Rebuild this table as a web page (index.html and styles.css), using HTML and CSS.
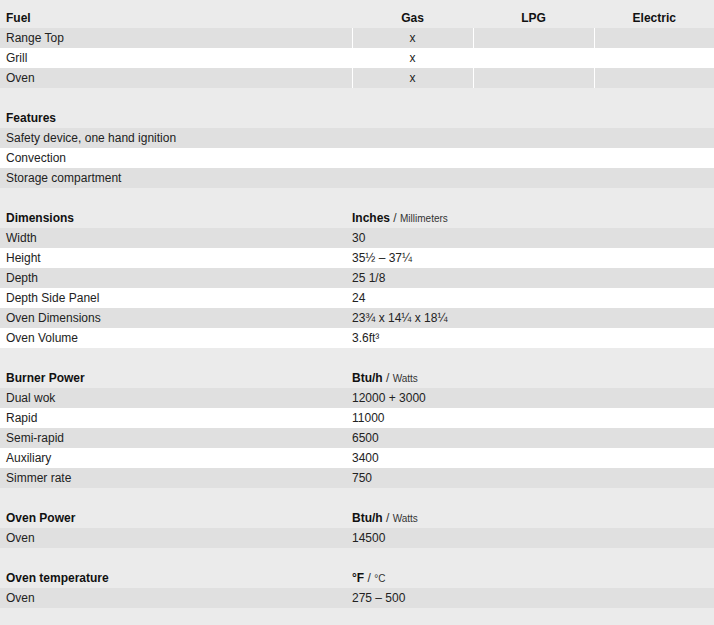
FILE: index.html
```html
<!DOCTYPE html>
<html>
<head>
<meta charset="utf-8">
<link rel="stylesheet" href="styles.css">
</head>
<body>
<div class="specs">
  <table class="spec fuel">
    <colgroup><col class="c-label"><col class="c-opt"><col class="c-opt"><col></colgroup>
    <tr class="head"><th>Fuel</th><th class="ctr">Gas</th><th class="ctr">LPG</th><th class="ctr">Electric</th></tr>
    <tr><td>Range Top</td><td class="opt">x</td><td class="opt"></td><td class="opt"></td></tr>
    <tr><td>Grill</td><td class="opt">x</td><td class="opt"></td><td class="opt"></td></tr>
    <tr><td>Oven</td><td class="opt">x</td><td class="opt"></td><td class="opt"></td></tr>
  </table>

  <table class="spec">
    <tr class="head"><th>Features</th></tr>
    <tr><td>Safety device, one hand ignition</td></tr>
    <tr><td>Convection</td></tr>
    <tr><td>Storage compartment</td></tr>
  </table>

  <table class="spec two">
    <colgroup><col class="c-name"><col></colgroup>
    <tr class="head"><th>Dimensions</th><th>Inches <span class="unit">/ <small>Millimeters</small></span></th></tr>
    <tr><td>Width</td><td>30</td></tr>
    <tr><td>Height</td><td>35½ – 37¼</td></tr>
    <tr><td>Depth</td><td>25 1/8</td></tr>
    <tr><td>Depth Side Panel</td><td>24</td></tr>
    <tr><td>Oven Dimensions</td><td>23¾ x 14¼ x 18¼</td></tr>
    <tr><td>Oven Volume</td><td>3.6ft³</td></tr>
  </table>

  <table class="spec two">
    <colgroup><col class="c-name"><col></colgroup>
    <tr class="head"><th>Burner Power</th><th>Btu/h <span class="unit">/ <small>Watts</small></span></th></tr>
    <tr><td>Dual wok</td><td>12000 + 3000</td></tr>
    <tr><td>Rapid</td><td>11000</td></tr>
    <tr><td>Semi-rapid</td><td>6500</td></tr>
    <tr><td>Auxiliary</td><td>3400</td></tr>
    <tr><td>Simmer rate</td><td>750</td></tr>
  </table>

  <table class="spec two">
    <colgroup><col class="c-name"><col></colgroup>
    <tr class="head"><th>Oven Power</th><th>Btu/h <span class="unit">/ <small>Watts</small></span></th></tr>
    <tr><td>Oven</td><td>14500</td></tr>
  </table>

  <table class="spec two">
    <colgroup><col class="c-name"><col></colgroup>
    <tr class="head"><th>Oven temperature</th><th>°F <span class="unit">/ <small>°C</small></span></th></tr>
    <tr><td>Oven</td><td>275 – 500</td></tr>
  </table>
</div>
</body>
</html>
```

FILE: styles.css
```css
html, body {
  margin: 0;
  padding: 0;
  background: #ebebeb;
}
body {
  font-family: "Liberation Sans", Arial, sans-serif;
  font-size: 12px;
  color: #222;
}
.specs {
  padding-top: 8px;
}
.spec {
  width: 100%;
  border-collapse: collapse;
  table-layout: fixed;
  margin-bottom: 20px;
}
.spec th, .spec td {
  height: 20px;
  padding: 0 0 0 6px;
  text-align: left;
  vertical-align: middle;
  line-height: 14px;
  white-space: nowrap;
}
.spec th {
  font-weight: bold;
  color: #111;
}
.spec tr:nth-child(even) td { background: #e0e0e0; }
.spec tr:nth-child(odd) td { background: #ffffff; }
.spec .c-label { width: 352px; }
.spec .c-opt { width: 121px; }
.spec .c-name { width: 346px; }
.spec th.ctr, .spec td.opt {
  text-align: center;
  padding: 0;
}
.spec td.opt, .spec th.ctr {
  border-left: 1px solid #ffffff;
}
.spec th.ctr { border-left-color: transparent; }
.unit {
  font-weight: normal;
  color: #333;
}
.unit small {
  font-size: 10px;
}
.two th + th, .two td + td {
  padding-left: 6px;
}
```
